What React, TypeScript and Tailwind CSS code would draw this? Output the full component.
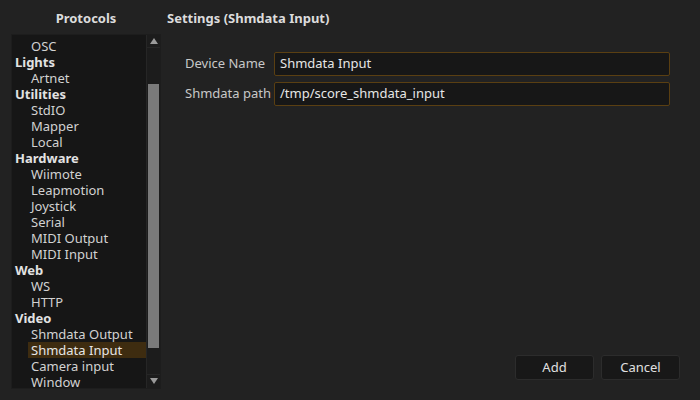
import React from "react";

type Item = { label: string; header?: boolean; selected?: boolean };

const items: Item[] = [
  { label: "OSC" },
  { label: "Lights", header: true },
  { label: "Artnet" },
  { label: "Utilities", header: true },
  { label: "StdIO" },
  { label: "Mapper" },
  { label: "Local" },
  { label: "Hardware", header: true },
  { label: "Wiimote" },
  { label: "Leapmotion" },
  { label: "Joystick" },
  { label: "Serial" },
  { label: "MIDI Output" },
  { label: "MIDI Input" },
  { label: "Web", header: true },
  { label: "WS" },
  { label: "HTTP" },
  { label: "Video", header: true },
  { label: "Shmdata Output" },
  { label: "Shmdata Input", selected: true },
  { label: "Camera input" },
  { label: "Window" },
];

export default function App() {
  return (
    <div
      className="w-[700px] h-[400px] bg-[#222222] flex text-[13px] text-[#d2d2d2] overflow-hidden"
      style={{ fontFamily: '"Noto Sans", "Open Sans", sans-serif' }}
    >
      {/* Left column */}
      <div className="w-[161px] flex flex-col pl-[11px]">
        <div className="h-[34px] flex items-center justify-center font-bold text-[#dcdcdc] pt-[4px]">
          Protocols
        </div>
        <div className="h-[355px] w-[150px] bg-[#161616] border border-[#1d1d1d] flex">
          <div className="flex-1 flex flex-col pt-[3px]">
            {items.map((it) => (
              <div
                key={it.label}
                className={
                  "h-[16px] leading-[16px] whitespace-nowrap " +
                  (it.header
                    ? "pl-[3px] font-bold text-[#e2e2e2]"
                    : it.selected
                    ? "ml-[16px] pl-[3px] bg-[#3e2c10] text-[#e6e6e6]"
                    : "pl-[19px]")
                }
              >
                {it.label}
              </div>
            ))}
          </div>
          <div className="w-[14px] flex flex-col bg-[#1c1c1c] border-l border-[#262626]">
            <div className="h-[13px] flex items-center justify-center border-b border-[#262626]">
              <svg width="8" height="6" viewBox="0 0 8 6">
                <path d="M4 0 L8 6 L0 6 Z" fill="#9a9a9a" />
              </svg>
            </div>
            <div className="flex-1 flex flex-col pt-[36px] pb-[26px] px-[1px]">
              <div className="flex-1 bg-[#7a7a7a]" />
            </div>
            <div className="h-[13px] flex items-center justify-center border-t border-[#262626] mb-[1px]">
              <svg width="8" height="6" viewBox="0 0 8 6">
                <path d="M0 0 L8 0 L4 6 Z" fill="#9a9a9a" />
              </svg>
            </div>
          </div>
        </div>
      </div>

      {/* Right column */}
      <div className="flex-1 flex flex-col pl-[6px] pr-[20px]">
        <div className="h-[34px] flex items-center font-bold text-[#dcdcdc] pt-[4px]">
          Settings (Shmdata Input)
        </div>
        <div className="flex flex-col gap-[6px] pt-[18px] pl-[18px] pr-[10px]">
          <div className="flex items-center">
            <div className="w-[89px] text-[#c8c8c8]">Device Name</div>
            <div className="flex-1 h-[24px] bg-[#171717] border border-[#5a3f12] rounded-[2px] flex items-center px-[5px] text-[#e6e6e6]">
              Shmdata Input
            </div>
          </div>
          <div className="flex items-center">
            <div className="w-[89px] text-[#c8c8c8]">Shmdata path</div>
            <div className="flex-1 h-[24px] bg-[#171717] border border-[#5a3f12] rounded-[2px] flex items-center px-[5px] text-[#e6e6e6]">
              /tmp/score_shmdata_input
            </div>
          </div>
        </div>
        <div className="flex-1" />
        <div className="flex justify-end gap-[7px] pb-[20px]">
          <div className="w-[79px] h-[25px] bg-[#181818] border border-[#2c2c2c] rounded-[3px] flex items-center justify-center text-[#e0e0e0]">
            Add
          </div>
          <div className="w-[79px] h-[25px] bg-[#181818] border border-[#2c2c2c] rounded-[3px] flex items-center justify-center text-[#e0e0e0]">
            Cancel
          </div>
        </div>
      </div>
    </div>
  );
}
